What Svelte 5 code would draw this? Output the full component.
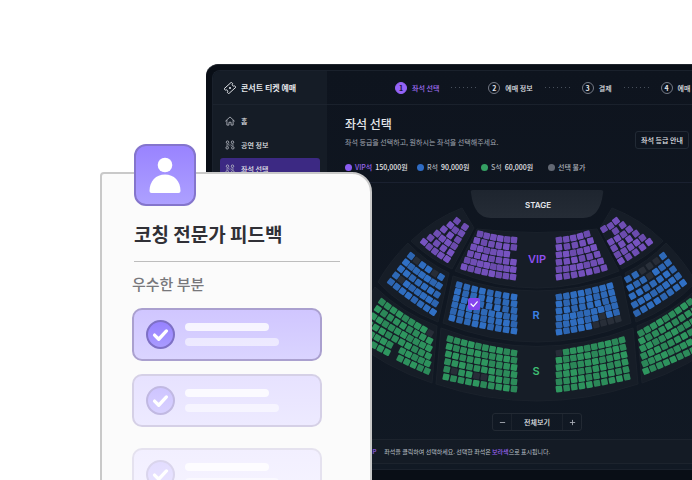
<script>
  const steps = ['좌석 선택', '예매 정보', '결제', '예매 완료'];

  const nav = [
    { label: '홈', icon: 'home' },
    { label: '공연 정보', icon: 'grid' },
    { label: '좌석 선택', icon: 'grid', active: true }
  ];

  const grades = [
    { name: 'VIP석', price: '150,000원', color: '#8a5cf0', vip: true },
    { name: 'R석', price: '90,000원', color: '#2f6cc4' },
    { name: 'S석', price: '60,000원', color: '#35a063' },
    { name: '선택 불가', price: '', color: '#626873' }
  ];

  const feedback = ['strong', 'soft', 'faint'];

  // Corners run top-left, top-right, bottom-left, bottom-right (seat centres).
  const blocks = [
    { grade: 'vip', p: [[457, 221], [465, 227], [424, 242], [447, 259]], rows: 6, from: 2, to: 5 },
    { grade: 'vip', p: [[480, 234], [514, 240], [464, 267], [513, 277]], rows: 6, from: 6, to: 8, none: ['2-6'] },
    { grade: 'vip', p: [[559, 240], [587, 234], [559, 277], [604, 268]], rows: 6, from: 5, to: 7 },
    { grade: 'vip', p: [[604, 229], [616, 221], [621, 261], [649, 242]], rows: 6, from: 3, to: 5, none: ['1-0'] },
    { grade: 'r', p: [[411, 256], [441, 277], [391, 282], [433, 312]], rows: 5, from: 6, to: 8, off: ['0-1', '0-4', '3-1'] },
    { grade: 'r', p: [[459, 285], [514, 297], [452, 318], [514, 331]], rows: 6, from: 8, to: 9 },
    { grade: 'r', p: [[559, 297], [610, 286], [559, 332], [618, 319]], rows: 6, from: 8, to: 9, off: ['4-6', '5-5', '5-6', '5-7', '5-8'] },
    { grade: 'r', p: [[628, 279], [663, 256], [637, 313], [683, 283]], rows: 5, from: 6, to: 8, off: ['0-2', '0-4', '0-3', '1-3'] },
    { grade: 's', p: [[382, 302], [430, 333], [361, 338], [427, 371]], rows: 6, from: 9, to: 11, off: ['0-8'], none: ['5-5', '4-5'] },
    { grade: 's', p: [[450, 339], [514, 353], [446, 377], [514, 389]], rows: 6, from: 10, to: 10, off: ['4-1', '4-4', '4-5'] },
    { grade: 's', p: [[559, 353], [622, 340], [559, 389], [627, 377]], rows: 6, from: 10, to: 10, off: ['0-0'] },
    { grade: 's', p: [[641, 333], [690, 302], [646, 371], [713, 340]], rows: 6, from: 9, to: 11 }
  ];

  const mix = (a, b, t) => [a[0] + (b[0] - a[0]) * t, a[1] + (b[1] - a[1]) * t];

  function seatsOf(block) {
    const seats = [];
    const [tl, tr, bl, br] = block.p;
    for (let r = 0; r < block.rows; r++) {
      const v = r / (block.rows - 1);
      const a = mix(tl, bl, v);
      const b = mix(tr, br, v);
      const count = Math.round(block.from + (block.to - block.from) * v);
      const angle = Math.atan2(b[1] - a[1], b[0] - a[0]);
      for (let c = 0; c < count; c++) {
        const key = `${r}-${c}`;
        if (block.none?.includes(key)) continue;
        const u = count > 1 ? c / (count - 1) : 0;
        const bow = 4 * u * (1 - u);
        const [x, y] = mix(a, b, u);
        seats.push({
          x: x - Math.sin(angle) * bow,
          y: y + Math.cos(angle) * bow,
          turn: ((angle - 0.1 * (u - 0.5)) * 180) / Math.PI,
          kind: block.off?.includes(key) ? 'off' : block.grade,
          shade: 0.84 + ((r * 7 + c * 5) % 4) * 0.04
        });
      }
    }
    return seats;
  }

  const seats = blocks.flatMap(seatsOf);

  const panels = [
    'M411 241Q433 219 462 208L474 228L452 269Q428 258 411 241Z',
    'M663 241Q641 219 612 208L600 228L622 269Q646 258 663 241Z',
    'M477 229Q537 236 597 229L619 271Q537 305 455 271Z',
    'M408 243Q426 262 449 273L438 322Q402 308 378 282Q390 261 408 243Z',
    'M666 243Q648 262 625 273L636 322Q672 308 696 282Q684 261 666 243Z',
    'M453 276Q537 306 621 276L631 323Q537 361 443 323Z',
    'M375 287Q402 313 437 326L432 383Q385 368 345 335Z',
    'M699 287Q672 313 637 326L642 383Q689 368 729 335Z',
    'M441 328Q537 365 633 328L638 384Q537 418 436 384Z'
  ];
</script>

{#snippet tick(width)}
  <svg class="tick" viewBox="0 0 16 16" aria-hidden="true">
    <path d="M3 8.5L6.500 12L13 5" fill="none" stroke="currentColor" stroke-width={width} stroke-linecap="round" stroke-linejoin="round" />
  </svg>
{/snippet}

<div class="page">
  <div class="window">
    <div class="screen">
      <aside>
        <div class="brand">
          <svg viewBox="0 0 16 16" aria-hidden="true">
            <g transform="rotate(-42 8 8)" fill="none" stroke="currentColor" stroke-width="1.2" stroke-linejoin="round">
              <path d="M1.500 3.500H14.500V6.200A1.800 1.800 0 0 0 14.500 9.800V12.500H1.500V9.800A1.800 1.800 0 0 0 1.500 6.200Z" />
              <path d="M8 6.500V9.500M6.500 8H9.500" />
            </g>
          </svg>
          <span>콘서트 티켓 예매</span>
        </div>
        <nav>
          {#each nav as item}
            <a href="#menu" class:active={item.active}>
              <svg viewBox="0 0 16 16" aria-hidden="true">
                {#if item.icon === 'home'}
                  <path d="M1 8L8 1.5L15 8M3 7V14.5H6.3V10H9.7V14.5H13V7" fill="none" stroke="currentColor" stroke-width="1.3" stroke-linejoin="round" stroke-linecap="round" />
                {:else}
                  <g fill="none" stroke="currentColor" stroke-width="1.3">
                    <circle cx="4" cy="3.5" r="2" />
                    <circle cx="12" cy="3.5" r="2" />
                    <circle cx="3.5" cy="12.5" r="2" />
                    <circle cx="12.5" cy="12.5" r="2" />
                    <path d="M2 8H5L7 6.5M14 8H11L9 9.5M6 10L7 9M10 6L9 7" />
                  </g>
                {/if}
              </svg>
              <span>{item.label}</span>
            </a>
          {/each}
        </nav>
      </aside>

      <main>
        <ol class="steps">
          {#each steps as step, i}
            {#if i > 0}<li class="dots" aria-hidden="true"></li>{/if}
            <li class="step" class:current={i === 0}>
              <span class="num">{i + 1}</span>
              <span>{step}</span>
            </li>
          {/each}
        </ol>

        <section class="intro">
          <div>
            <h1>좌석 선택</h1>
            <p>좌석 등급을 선택하고, 원하시는 좌석을 선택해주세요.</p>
          </div>
          <button type="button" class="guide">좌석 등급 안내</button>
        </section>

        <ul class="legend">
          {#each grades as g}
            <li class:vip={g.vip}>
              <i style:background={g.color}></i>
              <span>{g.name}</span>
              {#if g.price}<b>{g.price}</b>{/if}
            </li>
          {/each}
        </ul>

        <svg class="map" viewBox="327 183 420 224" role="img" aria-label="좌석 배치도">
          <defs>
            <linearGradient id="stage" x1="0" y1="0" x2="0" y2="1">
              <stop offset="0" stop-color="#1e252f" />
              <stop offset="1" stop-color="#252c36" />
            </linearGradient>
          </defs>
          {#each panels as d}
            <path class="panel" {d} />
          {/each}
          <path d="M473 190H601Q604 190 603 193Q600 218 583 218H491Q474 218 471 193Q470 190 473 190Z" fill="url(#stage)" />
          {#each seats as s}
            <rect class="seat {s.kind}" x="-3.2" y="-3.2" width="6.4" height="6.4" rx="1" opacity={s.shade} transform="translate({s.x} {s.y}) rotate({s.turn})" />
          {/each}
          <rect x="468" y="298" width="12" height="12" rx="2" fill="#8544ee" />
          <path d="M471 304L473.3 306.3L477.2 301.8" fill="none" stroke="#fff" stroke-width="1.2" stroke-linecap="round" />
          <text class="stage" x="538" y="208">STAGE</text>
          <text class="zone" x="537" y="263" fill="#8d4ff0">VIP</text>
          <text class="zone" x="536" y="319" fill="#3c82e6">R</text>
          <text class="zone" x="536" y="375" fill="#3fbd73">S</text>
        </svg>

        <div class="zoom">
          <button type="button" aria-label="축소"><svg viewBox="0 0 8 8"><path d="M1 4H7" /></svg></button>
          <button type="button" class="all">전체보기</button>
          <button type="button" aria-label="확대"><svg viewBox="0 0 8 8"><path d="M1 4H7M4 1V7" /></svg></button>
        </div>

        <footer>
          <em>VIP</em>
          <span>좌석을 클릭하여 선택하세요. 선택한 좌석은 <em>보라색</em>으로 표시됩니다.</span>
        </footer>
      </main>
    </div>
  </div>

  <article class="card">
    <div class="avatar">
      <svg viewBox="0 0 62 62" aria-hidden="true">
        <circle cx="31" cy="21" r="7.3" fill="#fff" />
        <path d="M15.5 47C15.5 37 22 30.500 31 30.500S46.500 37 46.500 47Q46.500 49 44.500 49H17.500Q15.500 49 15.500 47Z" fill="#fff" />
      </svg>
    </div>
    <h2>코칭 전문가 피드백</h2>
    <hr />
    <h3>우수한 부분</h3>
    <ul class="list">
      {#each feedback as tone}
        <li class={tone}>
          <span class="check">{@render tick(2.8)}</span>
          <span class="lines"><i></i><i></i></span>
        </li>
      {/each}
    </ul>
  </article>
</div>

<style>
  :global(body) {
    margin: 0;
    background: #fff;
  }
  .page {
    display: grid;
    height: 100vh;
    overflow: hidden;
    font-family: "Noto Sans CJK KR", "Noto Sans", sans-serif;
    background: #fff;
  }
  .page * {
    box-sizing: border-box;
  }
  .window,
  .card {
    grid-area: 1 / 1;
  }
  ul,
  ol {
    list-style: none;
    margin: 0;
    padding: 0;
  }
  h1, h2, h3, p {
    margin: 0;
  }
  button {
    font: inherit;
    color: inherit;
    background: none;
    border: 0;
    padding: 0;
  }

  .window {
    margin: 64px -61px 0 206px;
    padding: 5px 6px 6px;
    border-radius: 12px 12px 0 0;
    background: #090e16;
    border-top: 1px solid #20252d;
    color: #e4e6ea;
    font-size: 7px;
    line-height: 10px;
    font-weight: 500;
  }
  .screen {
    display: flex;
    border-radius: 8px 8px 0 0;
    border: solid #1a212c;
    border-width: 1px 0 1px 1px;
    background: #0f1620;
    overflow: hidden;
  }
  aside {
    flex: 0 0 114px;
    background: #151c26;
  }
  .brand {
    display: flex;
    align-items: center;
    gap: 5px;
    height: 34px;
    padding-left: 11px;
    border-bottom: 1px solid #1c232e;
    font-size: 8px;
    font-weight: 700;
  }
  .brand svg {
    width: 12px;
    height: 12px;
  }
  nav {
    display: flex;
    flex-direction: column;
    gap: 2px;
    padding: 5px 7px;
  }
  nav a {
    display: flex;
    align-items: center;
    gap: 6px;
    height: 22px;
    padding-left: 5px;
    border-radius: 3px;
    color: inherit;
    text-decoration: none;
  }
  nav a.active {
    background: #3c2983;
  }
  nav svg {
    width: 10px;
    height: 10px;
    color: #b9bdc5;
  }

  main {
    flex: 1;
    min-width: 0;
    background: linear-gradient(#0e141e, #111924);
  }
  .steps {
    display: flex;
    align-items: center;
    gap: 12px;
    height: 34px;
    padding-left: 68px;
    border-bottom: 1px solid #1a212c;
    white-space: nowrap;
  }
  .step {
    display: flex;
    align-items: center;
    gap: 5px;
  }
  .num {
    width: 12px;
    height: 12px;
    border: 1px solid #747985;
    border-radius: 50%;
    text-align: center;
    font-weight: 700;
  }
  .current {
    color: #a06ff5;
  }
  .current .num {
    background: #9463f7;
    border-color: #9463f7;
    color: #1a1433;
  }
  .dots {
    flex: 0 0 25px;
    height: 1px;
    background: repeating-linear-gradient(90deg, #48505c 0 1px, transparent 1px 4px);
  }
  .intro {
    display: flex;
    justify-content: space-between;
    align-items: flex-start;
    padding: 11px 58px 0 18px;
  }
  h1 {
    font-size: 12px;
    line-height: 16px;
    font-weight: 500;
  }
  .intro p {
    margin-top: 5px;
    font-weight: 400;
    color: #a0a5af;
  }
  .guide {
    width: 54px;
    height: 18px;
    margin-top: 15px;
    border: 1px solid #222a35;
    border-radius: 3px;
    white-space: nowrap;
  }
  .legend {
    display: grid;
    grid-template-columns: 72px 64px 67px auto;
    height: 34px;
    padding: 13px 18px 0;
    border-bottom: 1px solid #1a2130;
  }
  .legend li {
    display: flex;
    gap: 3px;
    white-space: nowrap;
    color: #a9aeb7;
  }
  .legend i {
    flex: 0 0 7px;
    height: 7px;
    margin-top: 2px;
    border-radius: 50%;
  }
  .legend .vip span {
    color: #9565ee;
  }
  .legend b {
    font-weight: 500;
    color: #e4e6ea;
  }

  .map {
    display: block;
    width: 100%;
    height: 224px;
  }
  .panel {
    fill: #161d27;
    stroke: #1a212b;
    stroke-width: 1;
  }
  .seat.vip { fill: #7c55c8; }
  .seat.r { fill: #3274cc; }
  .seat.s { fill: #309c62; }
  .seat.off { fill: #2b313b; }
  text {
    font-family: Inter, sans-serif;
    text-anchor: middle;
  }
  .stage {
    font-size: 8px;
    font-weight: 600;
    fill: #e4e6ea;
  }
  .zone {
    font-size: 11px;
    font-weight: 600;
  }

  .zoom {
    display: flex;
    width: 90px;
    height: 18px;
    margin: 6px auto 8px;
    border: 1px solid #222933;
    border-radius: 3px;
  }
  .zoom button {
    flex: 0 0 18px;
    display: grid;
    place-items: center;
  }
  .zoom .all {
    flex: 1;
    border: solid #1c232d;
    border-width: 0 1px;
  }
  .zoom svg {
    width: 7px;
    height: 7px;
    fill: none;
    stroke: #a9aeb7;
    stroke-width: 1;
  }
  footer {
    display: flex;
    align-items: center;
    gap: 8px;
    height: 25px;
    padding-left: 40px;
    border: solid #1c232d;
    border-width: 1px 0;
    background: #141b25;
    margin-bottom: 5px;
    font-size: 6px;
    font-weight: 400;
    color: #bcc0c8;
    white-space: nowrap;
  }
  em {
    font-style: normal;
    font-weight: 500;
    color: #9a62f2;
  }

  .card {
    position: relative;
    width: 272px;
    height: 340px;
    margin: 172px 0 0 100px;
    padding: 0 30px 0 32px;
    border: 2px solid #c9c9c9;
    border-radius: 4px 20px 0 0;
    background: #fbfbfb;
  }
  .avatar {
    width: 62px;
    height: 62px;
    margin-top: -30px;
    border: 2px solid #8475cc;
    border-radius: 12px;
    background: linear-gradient(#9983ff, #ada0ff);
  }
  .avatar svg {
    display: block;
    margin: -2px;
    width: 62px;
    height: 62px;
  }
  h2 {
    margin-top: 14px;
    font-size: 19px;
    line-height: 28px;
    font-weight: 700;
    color: #303036;
    white-space: nowrap;
  }
  hr {
    margin: 13px 0 11px;
    height: 1px;
    border: 0;
    background: #bdbdbd;
  }
  h3 {
    margin-left: -2px;
    font-size: 15px;
    line-height: 22px;
    font-weight: 500;
    color: #77777b;
  }
  .list {
    display: flex;
    flex-direction: column;
    gap: 13px;
    width: 190px;
    margin: 13px 0 0 -2px;
  }
  .list li {
    display: flex;
    align-items: center;
    gap: 10px;
    height: 53px;
    padding-left: 12px;
    border: 2px solid #aaa0cf;
    border-radius: 10px;
    background: linear-gradient(#d0c6ff, #dad4ff);
  }
  .list .soft {
    border-color: #d5d0e6;
    background: linear-gradient(#e7e2ff, #edeaff);
  }
  .list .faint {
    margin-top: 8px;
    border-color: #e5e2ef;
    background: linear-gradient(#f2efff, #f6f4ff);
  }
  .check {
    display: grid;
    place-items: center;
    width: 29px;
    height: 29px;
    border: 2px solid #7e70c6;
    border-radius: 50%;
    background: linear-gradient(#9782ff, #a99bff);
    color: #fff;
  }
  .soft .check {
    border-color: #c1b9e2;
    background: linear-gradient(#cec4ff, #d8d1ff);
  }
  .faint .check {
    border-color: #dad5ed;
    background: linear-gradient(#e3ddff, #e9e4ff);
  }
  .tick {
    width: 19px;
    height: 19px;
  }
  .lines {
    display: grid;
    gap: 7px;
  }
  .lines i {
    width: 84px;
    height: 8px;
    border-radius: 4px;
    background: rgb(255 255 255 / 80%);
  }
  .lines i + i {
    width: 94px;
    background: rgb(255 255 255 / 55%);
  }
</style>
